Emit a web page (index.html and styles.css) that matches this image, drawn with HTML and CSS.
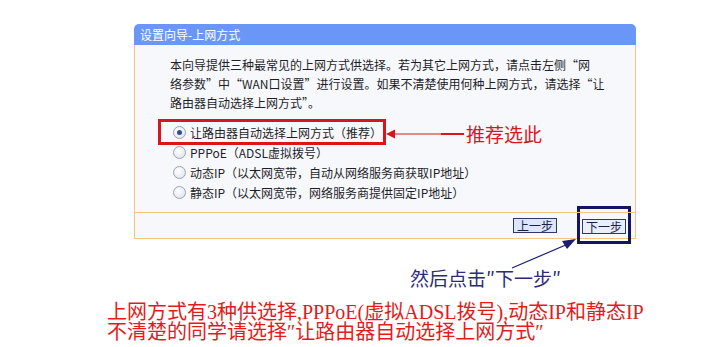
FILE: index.html
```html
<!DOCTYPE html>
<html lang="zh-CN">
<head>
<meta charset="utf-8">
<title>设置向导-上网方式</title>
<link rel="stylesheet" href="styles.css">
</head>
<body>
<div class="page">
  <div class="panel">
    <div class="title">设置向导-上网方式</div>
    <div class="box">
      <div class="content">
        <p class="intro">本向导提供三种最常见的上网方式供选择。若为其它上网方式，请点击左侧“网<br>络参数”中“WAN口设置”进行设置。如果不清楚使用何种上网方式，请选择“让<br>路由器自动选择上网方式”。</p>
        <div class="options">
          <div class="opt"><span class="radio on"></span>让路由器自动选择上网方式（推荐）</div>
          <div class="opt"><span class="radio"></span>PPPoE（ADSL虚拟拨号）</div>
          <div class="opt"><span class="radio"></span>动态IP（以太网宽带，自动从网络服务商获取IP地址）</div>
          <div class="opt"><span class="radio"></span>静态IP（以太网宽带，网络服务商提供固定IP地址）</div>
        </div>
        <div class="redbox"></div>
        <div class="callout">
          <svg class="red-arrow" width="80" height="14" viewBox="0 0 80 14">
            <polygon points="0,7 9,2.5 9,11.5" fill="#d8141c"/>
            <line x1="8" y1="7" x2="56" y2="7" stroke="#d8141c" stroke-width="1.2"/>
            <line x1="55" y1="7" x2="78" y2="7" stroke="#d8141c" stroke-width="2"/>
          </svg>
          <span class="callout-text">推荐选此</span>
        </div>
      </div>
      <div class="footer">
        <span class="btn">上一步</span>
        <span class="focus"><span class="btn btn-next">下一步</span></span>
      </div>
    </div>
  </div>
  <div class="hint">
    <svg class="navy-arrow" width="70" height="34" viewBox="0 0 70 34">
      <line x1="2" y1="31" x2="58" y2="7" stroke="#1d1d6e" stroke-width="1.2"/>
      <polygon points="66,2 52,4 57,12" fill="#1d1d6e"/>
    </svg>
    然后点击″下一步″
  </div>
  <div class="note">上网方式有3种供选择,PPPoE(虚拟ADSL拨号),动态IP和静态IP<br>不清楚的同学请选择″让路由器自动选择上网方式″</div>
</div>
</body>
</html>
```

FILE: styles.css
```css
html, body {
  margin: 0;
  padding: 0;
  background: #ffffff;
}
.page {
  width: 709px;
  height: 347px;
  overflow: hidden;
  font-family: "Noto Sans CJK SC", "Liberation Sans", sans-serif;
  position: relative;
}
.panel {
  margin: 24px 0 0 134px;
  width: 502px;
}
.title {
  height: 21px;
  line-height: 21px;
  background: #6a97f7;
  color: #ffffff;
  font-size: 12px;
  padding-left: 6px;
  border-radius: 5px 5px 0 0;
}
.box {
  border: 1px solid #efc589;
  border-top: none;
  background: #f7f8fb;
}
.content {
  position: relative;
  padding: 10px 0 10px 35px;
  border-bottom: 1px solid #efc589;
}
.intro {
  margin: 0;
  font-size: 12px;
  line-height: 19px;
  color: #1e1e2a;
  white-space: nowrap;
}
.options {
  margin-top: 10px;
  padding-left: 2px;
}
.opt {
  display: flex;
  align-items: center;
  height: 20px;
  font-size: 12px;
  color: #1e1e2a;
  white-space: nowrap;
}
.radio {
  width: 11px;
  height: 11px;
  border-radius: 50%;
  border: 1px solid #9aa3b3;
  background: radial-gradient(circle at 40% 35%, #ffffff 0%, #e6e9ef 70%, #cfd4dd 100%);
  margin-right: 4px;
  margin-left: 1px;
  flex: none;
  position: relative;
}
.radio.on::after {
  content: "";
  position: absolute;
  left: 3px;
  top: 3px;
  width: 5px;
  height: 5px;
  border-radius: 50%;
  background: #2a4f9a;
}
.redbox {
  position: absolute;
  left: 23px;
  top: 74px;
  width: 222px;
  height: 20px;
  border: 3px solid #d7161d;
}
.callout {
  position: absolute;
  left: 251px;
  top: 77px;
  display: flex;
  align-items: center;
}
.red-arrow {
  display: block;
}
.callout-text {
  font-size: 19px;
  line-height: 24px;
  color: #d7161d;
}
.footer {
  height: 25px;
  display: flex;
  justify-content: flex-end;
  align-items: center;
  padding-right: 4px;
  gap: 20px;
}
.btn {
  display: inline-block;
  font-size: 12px;
  line-height: 13px;
  height: 13px;
  padding: 0 3px;
  border: 1px solid #2b3a66;
  background: #dbe5fb;
  color: #1c1c4a;
}
.focus {
  display: inline-block;
  border: 3px solid #141463;
  padding: 4px 2px;
  margin: -3px 0 -2px;
}
.btn-next {
  background: #e9eefc;
}
.hint {
  position: relative;
  margin: 29px 0 0 410px;
  font-size: 19px;
  line-height: 20px;
  color: #2b2b78;
  white-space: nowrap;
}
.navy-arrow {
  position: absolute;
  left: 100px;
  top: -31px;
}
.note {
  margin: 14px 0 0 107px;
  font-family: "Liberation Serif", "Noto Sans CJK SC", serif;
  font-size: 20px;
  line-height: 20px;
  color: #e21b1b;
  white-space: nowrap;
}
```
